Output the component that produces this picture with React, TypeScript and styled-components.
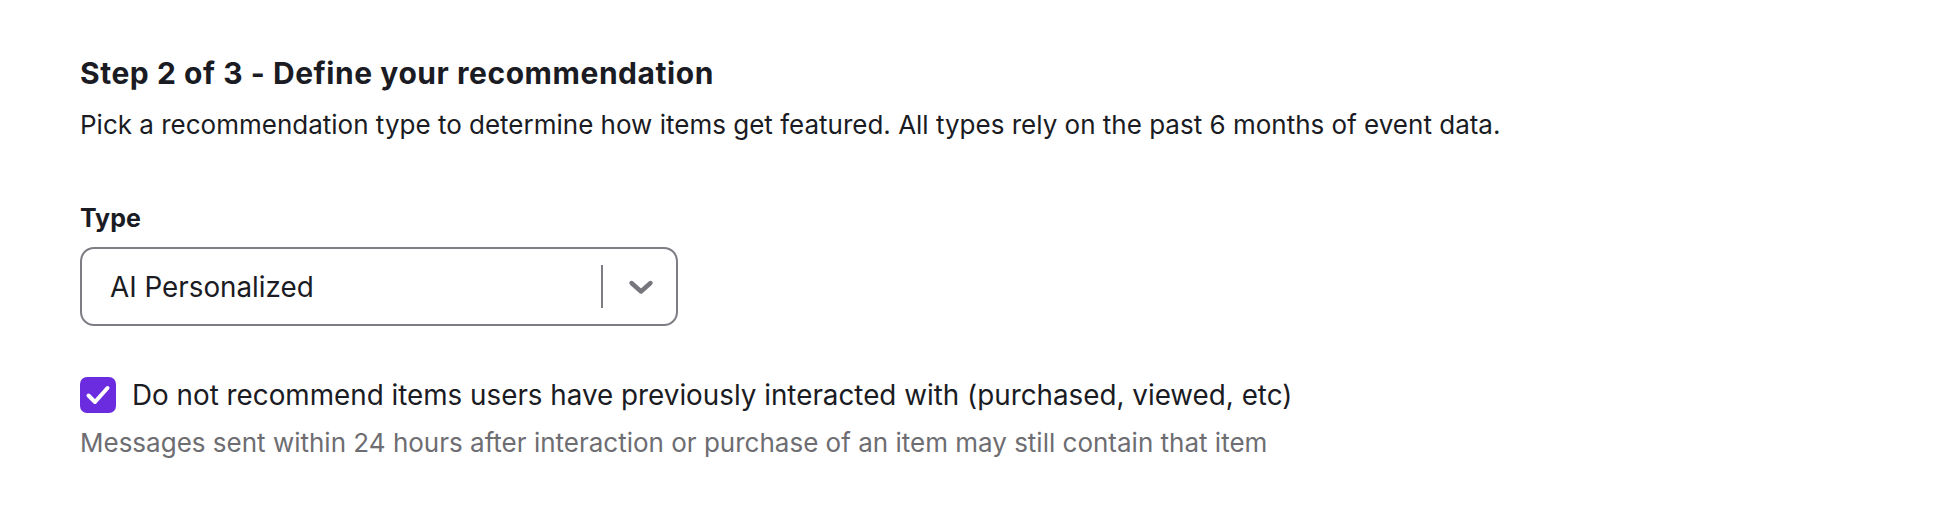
import React from "react";
import styled, { createGlobalStyle } from "styled-components";

const Global = createGlobalStyle`
  html, body { margin: 0; padding: 0; background: #ffffff; }
  body { font-family: Inter, "Noto Sans", sans-serif; color: #1b1c22; }
`;

const Page = styled.div`
  padding: 55px 80px 0 80px;
  display: flex;
  flex-direction: column;
`;

const Heading = styled.h2`
  margin: 0;
  font-size: 30px;
  line-height: 36px;
  font-weight: 700;
  letter-spacing: 0.55px;
  color: #1a1b23;
`;

const Subtitle = styled.p`
  margin: 18px 0 0 0;
  font-size: 26px;
  line-height: 32px;
  font-weight: 400;
  color: #1a1b23;
`;

const Field = styled.div`
  margin-top: 62px;
  display: flex;
  flex-direction: column;
  gap: 14px;
`;

const Label = styled.label`
  font-size: 25px;
  line-height: 30px;
  font-weight: 700;
  color: #1a1b23;
`;

const SelectBox = styled.div`
  box-sizing: border-box;
  width: 598px;
  height: 79px;
  border: 2px solid #7d7d83;
  border-radius: 14px;
  display: flex;
  align-items: center;
  padding: 0 22px 0 28px;
`;

const SelectValue = styled.span`
  flex: 1;
  font-size: 27.8px;
  color: #1a1b23;
`;

const Divider = styled.span`
  width: 2px;
  height: 43px;
  background: #7d7d83;
`;

const Chevron = styled.span`
  display: flex;
  margin-left: 25px;
  color: #77767c;
`;

const CheckRow = styled.div`
  margin-top: 51px;
  display: flex;
  align-items: center;
  gap: 16px;
`;

const Box = styled.span<{ checked: boolean }>`
  width: 36px;
  height: 36px;
  border-radius: 7px;
  background: ${(p) => (p.checked ? "#6b2cdf" : "#fff")};
  display: flex;
  align-items: center;
  justify-content: center;
  flex-shrink: 0;
`;

const CheckLabel = styled.span`
  font-size: 27.8px;
  line-height: 34px;
  color: #1a1b23;
`;

const Helper = styled.p`
  margin: 14px 0 0 0;
  font-size: 26px;
  line-height: 32px;
  color: #6d6d72;
`;

export default function App() {
  return (
    <>
      <Global />
      <Page>
        <Heading>Step 2 of 3 - Define your recommendation</Heading>
        <Subtitle>
          Pick a recommendation type to determine how items get featured. All types rely on the past 6 months of event data.
        </Subtitle>
        <Field>
          <Label>Type</Label>
          <SelectBox>
            <SelectValue>AI Personalized</SelectValue>
            <Divider />
            <Chevron>
              <svg width="26" height="16" viewBox="0 0 26 16" fill="none">
                <path d="M3.5 4l9.5 8.5L22.5 4" stroke="currentColor" strokeWidth="4.4" strokeLinecap="round" strokeLinejoin="round" />
              </svg>
            </Chevron>
          </SelectBox>
        </Field>
        <CheckRow>
          <Box checked>
            <svg width="26" height="22" viewBox="0 0 26 22" fill="none">
              <path d="M3.5 11.5l6.5 6.5L22.5 4" stroke="#fff" strokeWidth="4" strokeLinecap="round" strokeLinejoin="round" />
            </svg>
          </Box>
          <CheckLabel>Do not recommend items users have previously interacted with (purchased, viewed, etc)</CheckLabel>
        </CheckRow>
        <Helper>Messages sent within 24 hours after interaction or purchase of an item may still contain that item</Helper>
      </Page>
    </>
  );
}
